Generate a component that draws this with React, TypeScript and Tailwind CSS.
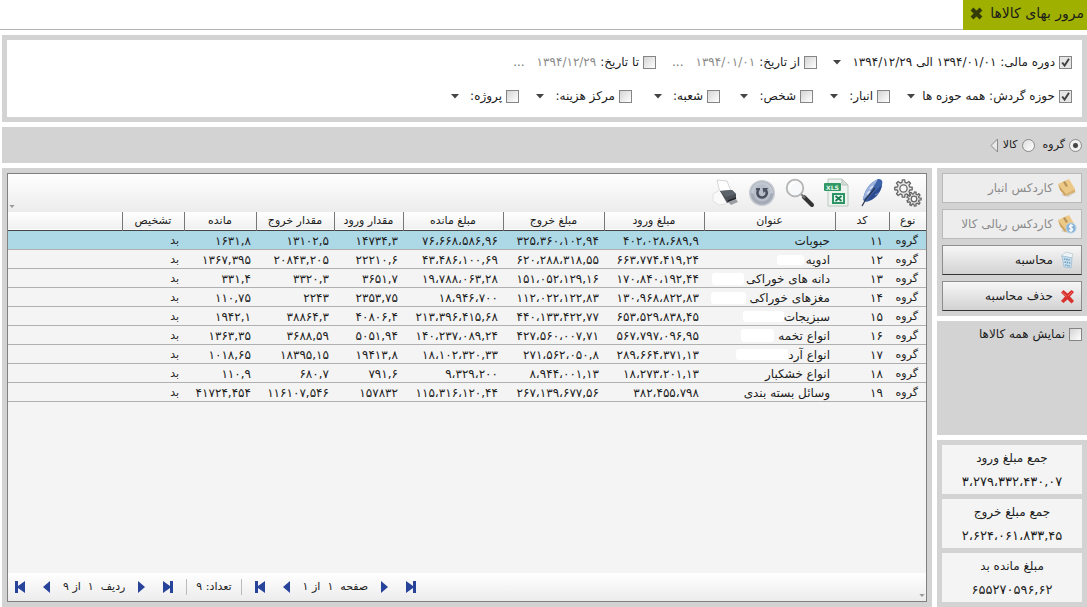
import React from "react";

type Row = { code: string; title: string; gap: number; blot: number; blotH: number; cells: string[] };

const rows: Row[] = [
  { code: "۱۱", title: "حبوبات", gap: 0, blot: 0, blotH: 0, cells: ["۴۰۲،۰۲۸،۶۸۹,۹", "۳۲۵،۳۶۰،۱۰۲,۹۴", "۷۶،۶۶۸،۵۸۶,۹۶", "۱۴۷۳۴,۳", "۱۳۱۰۲,۵", "۱۶۳۱,۸"] },
  { code: "۱۲", title: "ادویه", gap: 2, blot: 27, blotH: 10, cells: ["۶۶۳،۷۷۴،۴۱۹,۲۴", "۶۲۰،۲۸۸،۳۱۸,۵۵", "۴۳،۴۸۶،۱۰۰,۶۹", "۲۲۲۱۰,۶", "۲۰۸۴۳,۲۰۵", "۱۳۶۷,۳۹۵"] },
  { code: "۱۳", title: "دانه های خوراکی", gap: 2, blot: 32, blotH: 12, cells: ["۱۷۰،۸۴۰،۱۹۲,۴۴", "۱۵۱،۰۵۲،۱۲۹,۱۶", "۱۹،۷۸۸،۰۶۳,۲۸", "۳۶۵۱,۷", "۳۳۲۰,۳", "۳۳۱,۴"] },
  { code: "۱۴", title: "مغزهای خوراکی", gap: 4, blot: 35, blotH: 12, cells: ["۱۳۰،۹۶۸،۸۲۲,۸۳", "۱۱۲،۰۲۲،۱۲۲,۸۳", "۱۸،۹۴۶،۷۰۰", "۲۳۵۳,۷۵", "۲۲۴۳", "۱۱۰,۷۵"] },
  { code: "۱۵", title: "سبزیجات", gap: 0, blot: 41, blotH: 11, cells: ["۶۵۳،۵۲۹،۸۳۸,۴۵", "۴۴۰،۱۳۳،۴۲۲,۷۷", "۲۱۳،۳۹۶،۴۱۵,۶۸", "۴۰۸۰۶,۴", "۳۸۸۶۴,۳", "۱۹۴۲,۱"] },
  { code: "۱۶", title: "انواع تخمه", gap: 4, blot: 33, blotH: 13, cells: ["۵۶۷،۷۹۷،۰۹۶,۹۵", "۴۲۷،۵۶۰،۰۰۷,۷۱", "۱۴۰،۲۳۷،۰۸۹,۲۴", "۵۰۵۱,۹۴", "۳۶۸۸,۵۹", "۱۳۶۳,۳۵"] },
  { code: "۱۷", title: "انواع آرد", gap: 0, blot: 52, blotH: 11, cells: ["۲۸۹،۶۶۴،۳۷۱,۱۳", "۲۷۱،۵۶۲،۰۵۰,۸", "۱۸،۱۰۲،۳۲۰,۳۳", "۱۹۴۱۳,۸", "۱۸۳۹۵,۱۵", "۱۰۱۸,۶۵"] },
  { code: "۱۸", title: "انواع خشکبار", gap: 0, blot: 0, blotH: 0, cells: ["۱۸،۲۷۳،۲۰۱,۱۳", "۸،۹۴۴،۰۰۱,۱۳", "۹،۳۲۹،۲۰۰", "۷۹۱,۶", "۶۸۰,۷", "۱۱۰,۹"] },
  { code: "۱۹", title: "وسائل بسته بندی", gap: 0, blot: 0, blotH: 0, cells: ["۳۸۲،۴۵۵،۷۹۸", "۲۶۷،۱۳۹،۶۷۷,۵۶", "۱۱۵،۳۱۶،۱۲۰,۴۴", "۱۵۷۸۳۲", "۱۱۶۱۰۷,۵۴۶", "۴۱۷۲۴,۴۵۴"] },
];

const headers = ["نوع", "کد", "عنوان", "مبلغ ورود", "مبلغ خروج", "مبلغ مانده", "مقدار ورود", "مقدار خروج", "مانده", "تشخیص"];

const totals = [
  ["جمع مبلغ ورود", "۳،۲۷۹،۳۳۲،۴۳۰,۰۷"],
  ["جمع مبلغ خروج", "۲،۶۲۴،۰۶۱،۸۳۳,۴۵"],
  ["مبلغ مانده بد", "۶۵۵۲۷۰۵۹۶,۶۲"],
];

function Check({ label, checked }: { label: string; checked?: boolean }) {
  return (
    <label className="flex items-center gap-1 whitespace-nowrap">
      <input
        type="checkbox"
        defaultChecked={checked}
        className="size-[13px] shrink-0 appearance-none border border-[#858585] bg-linear-to-br from-[#d4d4d4] to-white checked:bg-[url('data:image/svg+xml;utf8,%3Csvg%20xmlns=%22http://www.w3.org/2000/svg%22%20viewBox=%220%200%2011%2011%22%3E%3Crect%20width=%2211%22%20height=%2211%22%20fill=%22%23e6e6e6%22/%3E%3Cpath%20d=%22M2.2%205.5%204.6%208.6%209%201.8%22%20fill=%22none%22%20stroke=%22%23404040%22%20stroke-width=%221.9%22/%3E%3C/svg%3E')]"
      />
      {label}
    </label>
  );
}

function Radio({ label, checked }: { label: string; checked?: boolean }) {
  return (
    <label className="flex items-center gap-1">
      <input
        type="radio"
        name="level"
        defaultChecked={checked}
        className="size-[13px] shrink-0 appearance-none rounded-full border border-[#8a8a8a] bg-linear-to-br from-[#dedede] to-white checked:bg-radial checked:from-[#444] checked:from-25% checked:to-[#f2f2f2] checked:to-40%"
      />
      {label}
    </label>
  );
}

function Caret({ label }: { label: string }) {
  return (
    <button type="button" aria-label={label} className="flex h-4 w-[14px] items-center justify-center">
      <svg width="8" height="5" viewBox="0 0 8 5"><path d="M0 0h8L4 4.5z" fill="#444" /></svg>
    </button>
  );
}

function gearPath(cx: number, cy: number, outer: number, inner: number, teeth: number) {
  const step = (Math.PI * 2) / teeth;
  const pts: string[] = [];
  for (let i = 0; i < teeth; i++) {
    const a = i * step;
    [[-0.3, inner], [-0.18, outer], [0.18, outer], [0.3, inner]].forEach(([f, r]) => {
      pts.push(`${(cx + r * Math.cos(a + f * step)).toFixed(2)} ${(cy + r * Math.sin(a + f * step)).toFixed(2)}`);
    });
  }
  return `M${pts.join("L")}z`;
}

const Gears = () => (
  <svg width="28" height="28" viewBox="0 0 28 28" fill="#e9e9e9" stroke="#666" strokeWidth="1.3" strokeLinejoin="round">
    <path d={gearPath(9.5, 9.5, 8.8, 6.4, 8)} />
    <circle cx="9.5" cy="9.5" r="3.6" fill="#f8f8f8" />
    <path d={gearPath(20, 20, 7.2, 5.2, 9)} />
    <circle cx="20" cy="20" r="2.8" fill="#f8f8f8" />
  </svg>
);

const Feather = () => (
  <svg width="26" height="30" viewBox="0 0 26 30">
    <path d="M4 22C5 13 10 5 19 1c4 0 5 2 4 6-1 8-7 15-16 17z" fill="#3f63a8" />
    <path d="M4 22C5 13 10 5 19 1c-3 6-7 10-9 15z" fill="#9cb2dc" />
    <path d="m8 23 5-7 10-9c-2 8-7 14-15 16z" fill="#2c4c8f" />
    <path d="m11 11 3-3m-6 8 3-3" stroke="#dbe4f5" strokeWidth="1.500" />
    <path d="m16 17 4-2" stroke="#7b97cb" />
    <path d="M3 28 7 21 16 10" fill="none" stroke="#2b3550" strokeWidth="1.300" />
  </svg>
);

const Excel = () => (
  <svg width="26" height="30" viewBox="0 0 26 30">
    <path d="M4 1h14l6 6v21H4z" fill="#eef3f0" stroke="#b9c8bf" />
    <path d="M18 1v6h6z" fill="#d6ddd9" stroke="#b9c3bd" />
    <rect x="0" y="5" width="17" height="8" rx="1" fill="#319966" />
    <text x="8.5" y="11.500" textAnchor="middle" fontSize="6" fontWeight="bold" fill="#e4f5eb" fontFamily="DejaVu Sans">XLS</text>
    <rect x="8" y="15" width="13" height="11" fill="#2c9564" />
    <rect x="10" y="17" width="9" height="7" fill="#e9f5ef" />
    <path d="m11.500 18 6 5m0-5-6 5" stroke="#1c7d50" strokeWidth="1.8" />
  </svg>
);

const Magnifier = () => (
  <svg width="30" height="30" viewBox="0 0 30 30">
    <path d="m19 19 8 8" stroke="#333" strokeWidth="4" strokeLinecap="round" />
    <path d="m16 16 4 4" stroke="#777" strokeWidth="2.200" />
    <circle cx="10" cy="10" r="8.300" fill="#f6f8f9" stroke="#b4b4b4" strokeWidth="1.8" />
    <path d="M5 10c0-3 2-5 5-5" fill="none" stroke="#fff" strokeWidth="1.8" />
  </svg>
);

const Refresh = () => (
  <svg width="28" height="28" viewBox="0 0 28 28">
    <circle cx="14" cy="14" r="12.300" fill="#a4abb6" stroke="#c8ccd3" strokeWidth="1.500" />
    <path d="M3 14a11 11 0 0 1 22 0c-6 2-16 2-22 0z" fill="#c3c9d2" />
    <circle cx="14" cy="14" r="8.500" fill="#b9bfca" />
    <path d="M10.500 10.500c-2 3-1 8 3.500 8s6-5 3.500-8" fill="none" stroke="#4a5160" strokeWidth="2.600" />
    <path d="M14.500 9h6l-5 5z" fill="#4a5160" />
    <path d="M8 10h4" stroke="#4a5160" strokeWidth="2" />
  </svg>
);

const Printer = () => (
  <svg width="28" height="28" viewBox="0 0 28 28">
    <path d="m6 1 10 1 4 10-11 2z" fill="#fff" stroke="#d6d6d6" />
    <path d="m2 15 7-4 8 8-2 6-7 1-6-4z" fill="#fafafa" stroke="#e0e0e0" />
    <path d="m9 12 12-1 4 4v5l-9 4z" fill="#4b5057" />
    <path d="m9 12 12-1 4 4-10 3z" fill="#5d636b" />
    <path d="m17 23 8-3 2 3-7 3z" fill="#9b9fa5" />
    <path d="m17 22 8-3" stroke="#22252a" strokeWidth="1.500" />
  </svg>
);

function BoxIcon({ coin }: { coin?: boolean }) {
  return (
    <svg width="20" height="20" viewBox="0 0 20 20" className="shrink-0">
      <path d="m4 17 7 2 8-5-4-3z" fill="#c4bfb4" opacity=".7" />
      <path d="m1 6 11-5 6 10-9 5z" fill="#edc987" />
      <path d="m1 6 2 6 5 6 1-2z" fill="#cfa25a" />
      <path d="m9 16 9-5v3l-10 4z" fill="#dab06a" />
      <path d="m6 4 2-1 3 5-2 1z" fill="#b8955c" />
      {coin && <circle cx="14" cy="14" r="5" fill="#8ab4d8" stroke="#b5d0e5" />}
      {coin && <path d="M16 12c-3-2-5 1-2 2s1 4-2 2m2-6v8" fill="none" stroke="#fff" strokeWidth="1.200" />}
    </svg>
  );
}

const Calculator = () => (
  <svg width="16" height="18" viewBox="0 0 16 18" className="shrink-0">
    <path d="m2 5 5-4 7 2-1 4z" fill="#edf3f6" stroke="#c6d3da" />
    <path d="m3 5 10 2-1 10-7-1z" fill="#cfe2ef" stroke="#a6c3d6" />
    <path d="m5 8 6 1M5.500 11l6 1M6 14l5 1" stroke="#6f9fc0" strokeWidth="1.600" strokeDasharray="1.500 .7" />
  </svg>
);

const Cross = () => (
  <svg width="15" height="15" viewBox="0 0 15 15" className="shrink-0">
    <path d="M1 3.500 3.500 1 7.500 4.500 11.500 1 14 3 10 7.500 14 12l-2.500 2.500L7.500 10.500 3.500 14 1 12 5 7.500z" fill="#d8302c" />
    <path d="M2.500 3.500 7 7.500M12 3 8 7" stroke="#ee6e66" strokeWidth="1" />
  </svg>
);

function Nav({ kind, label }: { kind: "first" | "prev" | "next" | "last"; label: string }) {
  const shapes = {
    first: "M1 1h3v5l7-5v12L4 8v5H1z",
    prev: "M9 1v12L2 7z",
    next: "M3 1v12l7-6z",
    last: "M11 1H8v5L1 1v12l7-5v5h3z",
  };
  return (
    <button type="button" aria-label={label}>
      <svg width="12" height="14" viewBox="0 0 12 14"><path d={shapes[kind]} fill="#27439a" /></svg>
    </button>
  );
}

function Pager({ text, unit }: { text: string; unit: string }) {
  return (
    <div className="flex items-center gap-[15px]" dir="ltr">
      <Nav kind="first" label={`اولین ${unit}`} />
      <Nav kind="prev" label={`${unit} قبلی`} />
      <span dir="rtl" className="-mx-[5px] whitespace-pre">{text}</span>
      <Nav kind="next" label={`${unit} بعدی`} />
      <Nav kind="last" label={`آخرین ${unit}`} />
    </div>
  );
}

const sideButton = "flex h-[30px] w-full items-center gap-1 whitespace-nowrap border px-1 text-right";

export default function App() {
  return (
    <div dir="rtl" className="flex min-h-screen flex-col gap-[5px] bg-white pl-[2px] font-['DejaVu_Sans',sans-serif] text-[12px] leading-4 text-[#1c1c1c]">
      <header className="-ml-[2px] flex h-[30px] border-b border-[#b5b5b5]">
        <div className="flex h-[30px] w-[124px] items-center gap-[7px] bg-[#a0b000] pr-[3px] pb-1">
          <h1 className="whitespace-nowrap text-[14px] leading-5">مرور بهای کالاها</h1>
          <button type="button" aria-label="بستن">
            <svg width="13" height="13" viewBox="0 0 13 13"><path d="m2 2 9 9M11 2l-9 9" stroke="#343c0a" strokeWidth="4" /></svg>
          </button>
        </div>
      </header>

      <section className="flex flex-col gap-[18px] border-5 border-[#d3d3d3] pt-[14px] pr-[10px] pb-[13px]">
        <div className="flex items-center">
          <div className="flex w-[255px] items-center gap-2">
            <Check label="دوره مالی: ۱۳۹۴/۰۱/۰۱ الی ۱۳۹۴/۱۲/۲۹" checked />
            <Caret label="انتخاب دوره مالی" />
          </div>
          <div className="flex w-[161px] items-center gap-1">
            <Check label="از تاریخ:" />
            <span className="text-[#8a8a8a]">۱۳۹۴/۰۱/۰۱</span>
            <button type="button" className="mr-2 text-[#777]">...</button>
          </div>
          <div className="flex items-center gap-1">
            <Check label="تا تاریخ:" />
            <span className="text-[#8a8a8a]">۱۳۹۴/۱۲/۲۹</span>
            <button type="button" className="mr-2 text-[#777]">...</button>
          </div>
        </div>
        <div className="flex items-center">
          <div className="flex w-[182px] items-center gap-1"><Check label="حوزه گردش: همه حوزه ها" checked /><Caret label="انتخاب حوزه" /></div>
          <div className="flex w-[77px] items-center gap-2"><Check label="انبار:" /><Caret label="انتخاب انبار" /></div>
          <div className="flex w-[93px] items-center gap-2"><Check label="شخص:" /><Caret label="انتخاب شخص" /></div>
          <div className="flex w-[88px] items-center gap-2"><Check label="شعبه:" /><Caret label="انتخاب شعبه" /></div>
          <div className="flex w-[113px] items-center gap-2"><Check label="مرکز هزینه:" /><Caret label="انتخاب مرکز هزینه" /></div>
          <div className="flex items-center gap-2"><Check label="پروژه:" /><Caret label="انتخاب پروژه" /></div>
        </div>
      </section>

      <section className="flex h-9 items-center bg-[#d3d3d3] pr-[5px] text-[11px]">
        <div className="flex items-center gap-2">
          <Radio label="گروه" checked />
          <Radio label="کالا" />
        </div>
        <button type="button" aria-label="سطح بعد" className="mr-1">
          <svg width="9" height="15" viewBox="0 0 9 15"><path d="M7.500 1v13L1 7.500z" fill="#e8e8e8" stroke="#8a8a8a" /></svg>
        </button>
      </section>

      <main className="flex flex-1 gap-[5px]">
        <aside className="flex w-[150px] shrink-0 flex-col gap-[5px]">
          <div className="flex flex-col gap-[6px] bg-[#d3d3d3] p-[5px]">
            <button type="button" disabled className={`${sideButton} border-[#b9b9b9] bg-[#ededed] text-[#8b8b8b]`}><BoxIcon />کاردکس انبار</button>
            <button type="button" disabled className={`${sideButton} border-[#b9b9b9] bg-[#ededed] text-[#8b8b8b]`}><BoxIcon coin />کاردکس ریالی کالا</button>
            <button type="button" className={`${sideButton} border-[#8d8d8d] border-b-[#333] bg-linear-to-b from-[#f7f7f7] to-[#d2d2d2]`}><span className="flex w-5 justify-center"><Calculator /></span>محاسبه</button>
            <button type="button" className={`${sideButton} border-[#8d8d8d] border-b-[#333] bg-linear-to-b from-[#f7f7f7] to-[#d2d2d2]`}><span className="flex w-5 justify-center"><Cross /></span>حذف محاسبه</button>
          </div>
          <div className="flex-1 bg-[#d3d3d3] p-[5px]"><Check label="نمایش همه کالاها" /></div>
          <dl className="flex flex-col gap-[5px] bg-[#d3d3d3] p-[5px] text-center">
            {totals.map(([k, v]) => (
              <div key={k} className="flex h-[49px] flex-col justify-center gap-2 bg-[#f4f4f4]">
                <dt>{k}</dt>
                <dd className="text-[13px]">{v}</dd>
              </div>
            ))}
          </dl>
        </aside>

        <section className="flex min-w-0 flex-1 flex-col border-5 border-[#d3d3d3]">
          <div className="flex flex-1 flex-col border border-[#808080] bg-[#f4f4f4]">
            <div className="flex h-[38px] items-center justify-between bg-linear-to-b from-white to-[#ececec] pr-1">
              <div className="flex items-center gap-[9px]">
                <button type="button" aria-label="تنظیمات"><Gears /></button>
                <button type="button" aria-label="ویرایش"><Feather /></button>
                <button type="button" aria-label="خروجی اکسل"><Excel /></button>
                <button type="button" aria-label="جستجو"><Magnifier /></button>
                <button type="button" aria-label="بازخوانی"><Refresh /></button>
                <button type="button" aria-label="چاپ"><Printer /></button>
              </div>
              <svg width="6" height="3" viewBox="0 0 7 4" className="mb-1 ml-[1px] self-end"><path d="M0 0h7L3.500 4z" fill="#999" /></svg>
            </div>
            <table className="w-full table-fixed border-collapse">
              <colgroup>
                <col className="w-[37px]" />
                <col className="w-[54px]" />
                <col className="w-[131px]" />
                <col className="w-[100px]" />
                <col className="w-[101px]" />
                <col className="w-[100px]" />
                <col className="w-[69px]" />
                <col className="w-[78px]" />
                <col className="w-[72px]" />
                <col className="w-[62px]" />
                <col />
              </colgroup>
              <thead>
                <tr className="h-[18px] border-b border-[#444] bg-linear-to-b from-white to-[#f0f0f0] text-[11px]">
                  {headers.map((h, i) => (
                    <th key={i} scope="col" className="whitespace-nowrap border-l border-[#777] p-0 pt-px text-center font-normal">{h}</th>
                  ))}
                  <td />
                </tr>
              </thead>
              <tbody>
                {rows.map((r, i) => (
                  <tr key={r.code} className={`h-[19px] border-b border-[#b0b0b0] ${i === 0 ? "bg-[#add8e6]" : ""}`}>
                    <td className="p-0 pt-[2px] pr-2 text-[11px]">گروه</td>
                    <td className="p-0 pt-[2px] pr-[6px]">{r.code}</td>
                    <td className="p-0 pt-[2px] pr-[5px]">
                      <div className="flex items-center whitespace-nowrap">
                        {r.title}
                        {r.blot > 0 && <span className="rounded-[3px] bg-white" style={{ width: r.blot, height: r.blotH, marginRight: r.gap }} />}
                      </div>
                    </td>
                    {r.cells.map((c, j) => (
                      <td key={j} className="whitespace-nowrap p-0 pt-[2px] pr-[5px]">{c}</td>
                    ))}
                    <td className="p-0 pt-[2px] pr-[5px] text-[11px]">بد</td>
                    <td className="p-0" />
                  </tr>
                ))}
              </tbody>
            </table>
            <div className="flex-1" />
            <footer dir="ltr" className="flex h-7 items-center bg-linear-to-b from-white to-[#ececec] pl-[6px] text-[11px]">
              <Pager text="ردیف  ۱  از ۹" unit="ردیف" />
              <div dir="rtl" className="mx-3 border-x border-[#bbb] px-[9px]">تعداد: ۹</div>
              <Pager text="صفحه  ۱  از ۱" unit="صفحه" />
              <svg width="6" height="3" viewBox="0 0 7 4" className="mt-auto mr-[1px] mb-1 ml-auto"><path d="M0 0h7L3.500 4z" fill="#999" /></svg>
            </footer>
          </div>
        </section>
      </main>
    </div>
  );
}
